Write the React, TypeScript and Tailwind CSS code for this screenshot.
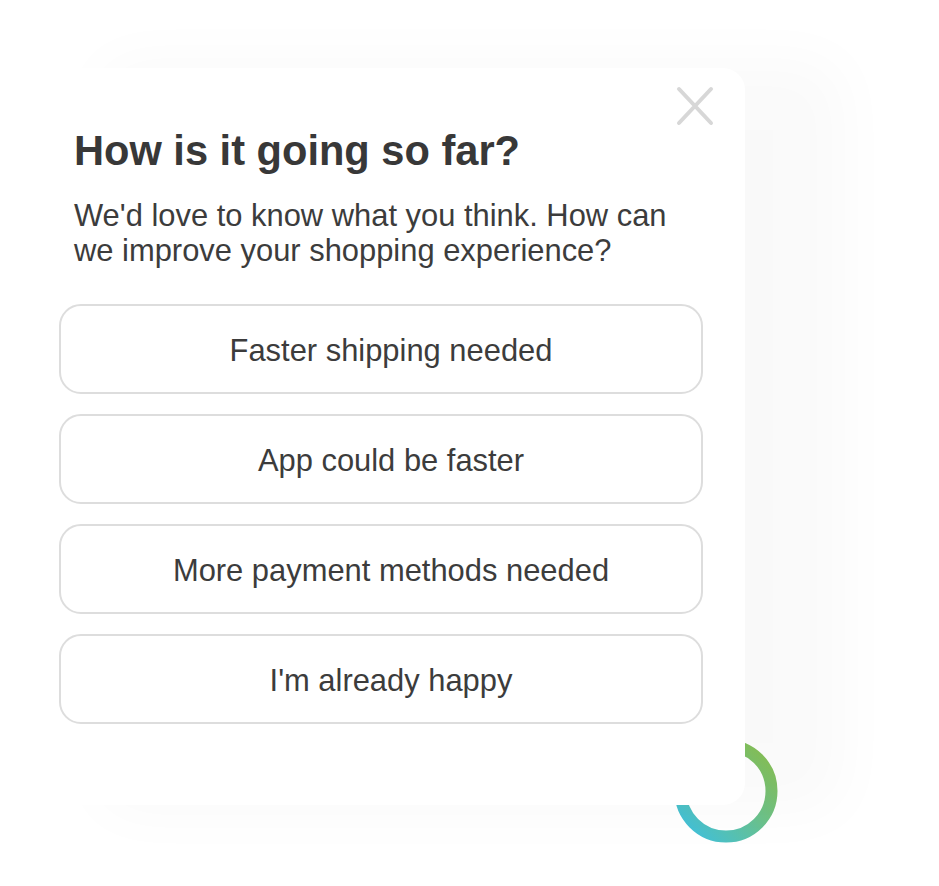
import React from 'react';

const OPTIONS = [
  'Faster shipping needed',
  'App could be faster',
  'More payment methods needed',
  "I'm already happy",
];

const ProgressRing = () => (
  <svg width="104" height="104" viewBox="0 0 104 104" className="absolute left-[674px] top-[739px] z-0">
    <defs>
      <linearGradient id="ringGrad" x1="0" y1="1" x2="1" y2="0">
        <stop offset="0%" stopColor="#3cc0e4" />
        <stop offset="55%" stopColor="#6cc28a" />
        <stop offset="100%" stopColor="#8cc04c" />
      </linearGradient>
    </defs>
    <circle cx="52" cy="52" r="45.5" fill="none" stroke="url(#ringGrad)" strokeWidth="12" />
  </svg>
);

export default function App() {
  return (
    <div className="relative w-[939px] h-[886px] bg-white overflow-hidden" style={{ fontFamily: '"Liberation Sans", Arial, sans-serif' }}>
      <ProgressRing />
      <div className="pt-[68px] pl-[17px]">
        <div className="relative z-10 w-[728px] h-[737px] bg-white rounded-[22px] px-[42px] shadow-[90px_0_60px_10px_rgba(0,0,0,0.022)]">
          <button className="absolute right-[31px] top-[18px] w-[38px] h-[40px] flex items-center justify-center">
            <svg width="38" height="40" viewBox="0 0 38 40" fill="none" stroke="#d7d7d7" strokeWidth="4" strokeLinecap="round">
              <path d="M3 3 L35 37 M35 3 L3 37" />
            </svg>
          </button>
          <div className="pl-[15px]">
            <h1 className="pt-[62px] text-[41.6px] leading-none font-bold text-[#383838]">How is it going so far?</h1>
            <p className="mt-[26px] text-[30.9px] leading-[35px] text-[#3c3c3c]">
              We'd love to know what you think. How can we improve your shopping experience?
            </p>
          </div>
          <div className="mt-[36px] flex flex-col gap-[20px]">
            {OPTIONS.map((o) => (
              <button
                key={o}
                className="h-[90px] w-full rounded-[22px] border-2 border-[#dddddd] bg-white pl-[20px] pt-[5px] text-[30.9px] text-[#3c3c3c]"
              >
                {o}
              </button>
            ))}
          </div>
        </div>
      </div>
    </div>
  );
}
